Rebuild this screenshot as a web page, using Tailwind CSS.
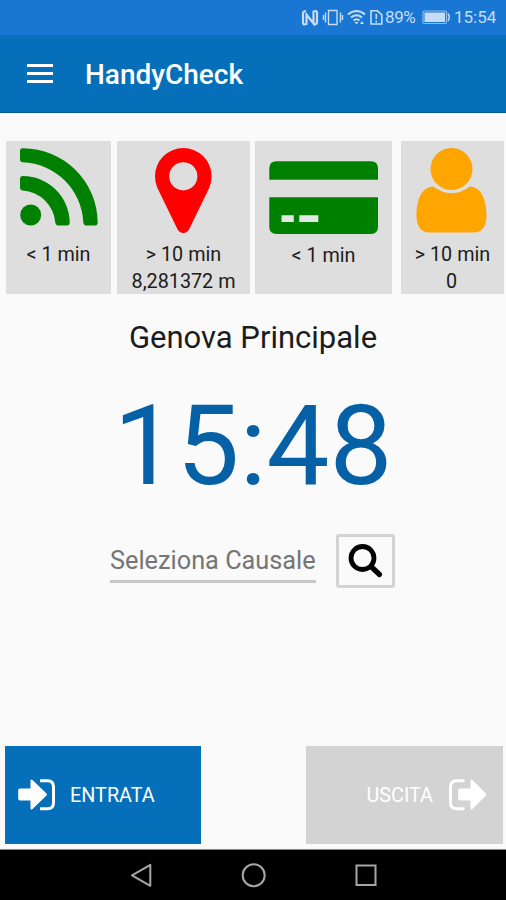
<!DOCTYPE html>
<html lang="it">
<head>
    <meta charset="UTF-8">
    <meta name="viewport" content="width=device-width, initial-scale=1.0">
    <title>HandyCheck</title>
    <script src="https://cdn.jsdelivr.net/npm/@tailwindcss/browser@4"></script>
</head>
<body class="flex flex-col h-[900px] w-[506px] overflow-hidden bg-[#fafafa] font-['Roboto',sans-serif] text-[#1c1c1c]">
    <!-- Status bar -->
    <div class="flex h-[35px] shrink-0 items-center bg-[#1976d2] pl-[301px] text-[#c5dcf4]">
        <svg class="h-[35px] w-[84px] shrink-0" viewBox="301 0 84 35" fill="none" stroke="currentColor">
            <path d="M306 11q-3 0-3 2.500v9q0 2 1.500 2l2-.5V14.500L313.500 23.500V11.500l2-.5q1.500 0 1.500 2v9q0 2.500-3 2.500" stroke-width="2.200" />
            <path d="M328.500 10.500h8.500v14h-8.500zM325.500 12.500v10M340.500 12.500v10M323.500 15v5M342.500 15v5" stroke-width="1.400" />
            <path d="M348 14.500q8.500-7 17 0M351 17.500q5.500-4.500 11 0M353.500 20.500q3-2.500 6 0" stroke-width="1.900" />
            <path d="M354.500 22l2 2.500 2-2.500zM362 21l-2 3h4z" fill="currentColor" stroke="none" />
            <path d="M371 10.800h6.500l4.300 4v9.200h-10.800zM376.300 14v5M376.300 20.500v2" stroke-width="1.600" />
        </svg>
        <span class="mt-[1px] w-[37px] text-[17px] tracking-[-0.4px]">89%</span>
        <svg class="h-[35px] w-[30px] shrink-0" viewBox="420 0 30 35" fill="none" stroke="currentColor">
            <rect x="421" y="11" width="23.500" height="12.500" rx="1.500" stroke-width="1.200" opacity=".7" />
            <rect x="422.500" y="12.500" width="20.500" height="9.500" fill="currentColor" stroke="none" />
            <path d="M446 13.500q2.500 3.700 0 7.500" stroke-width="1.500" />
        </svg>
        <span class="mt-[1px] ml-[2px] text-[17px]">15:54</span>
    </div>

    <!-- Toolbar -->
    <header class="flex h-[78px] shrink-0 items-center border-b border-[#0459a0] bg-[#066fb9] pl-[27px] text-white">
        <div class="flex w-[26px] flex-col gap-[5px]">
            <div class="h-[3px] bg-white"></div>
            <div class="h-[3px] bg-white"></div>
            <div class="h-[3px] bg-white"></div>
        </div>
        <h1 class="mt-[2px] ml-[32px] text-[28px] font-medium">HandyCheck</h1>
    </header>

    <!-- Sensor tiles -->
    <section class="mt-[28px] flex h-[153px] shrink-0 pl-[6px] text-center text-[19.8px] leading-[27px]">
        <div class="w-[105px] bg-[#dedede]">
            <svg class="h-[100px] w-[105px]" viewBox="6 141 105 100" fill="#008000">
                <circle cx="30.700" cy="215" r="10.500" />
                <path d="M23 148.200A75 75 0 0 1 97.700 222.500Q97.700 225.600 94.700 225.600H86.500Q83.700 225.600 83.300 222.500A63 63 0 0 0 22.800 162.300Q20 162 20 159.500V151Q20 148 23 148.200Z" />
                <path d="M23.200 176A47 47 0 0 1 69.700 222.300Q69.900 225.600 66.700 225.600H58.300Q55.800 225.600 55.300 222.500A35 35 0 0 0 22.800 190.500Q20 190 20 187.500V179Q20 175.800 23.200 176Z" />
            </svg>
            <p>&lt; 1 min</p>
        </div>
        <div class="ml-[6px] w-[133px] bg-[#dedede]">
            <svg class="h-[100px] w-[133px]" viewBox="117 141 133 100" fill="#f00">
                <path fill-rule="evenodd" d="M183.300 148A28.300 28.300 0 0 1 211.600 176.300Q211.600 182 209.300 187.700L189 229.500Q187 232.900 183.300 232.900T177.600 229.500L157.300 187.700Q155 182 155 176.300A28.300 28.300 0 0 1 183.300 148ZM183.300 162.200a14.100 14.100 0 1 0 0 28.200a14.100 14.100 0 1 0 0-28.200Z" />
            </svg>
            <p>&gt; 10 min</p>
            <p>8,281372 m</p>
        </div>
        <div class="ml-[5px] w-[137px] bg-[#dedede]">
            <svg class="h-[101px] w-[137px]" viewBox="255 141 137 101" fill="#008000">
                <path d="M269.300 179.800V168.500Q269.300 161.300 276.500 161.300H370.800Q378 161.300 378 168.500V179.800Z" />
                <path d="M269.300 197.300H378V226.800Q378 234 370.800 234H276.500Q269.300 234 269.300 226.800Z" />
                <path d="M281.500 215.300h12.300v6.700h-12.300zM299.300 215.300h19v6.700h-19z" fill="#e4e8e4" />
            </svg>
            <p>&lt; 1 min</p>
        </div>
        <div class="ml-[9px] w-[103px] bg-[#dedede]">
            <svg class="h-[100px] w-[103px]" viewBox="401 141 103 100" fill="#ffa500">
                <circle cx="451.500" cy="169" r="21" />
                <path d="M433 186.500Q451.500 200 470 186.500C481 187 486.500 199 486.500 216C486.500 226 482 232.500 474 232.500H429C421 232.500 416.500 226 416.500 216C416.500 199 422 187 433 186.500Z" />
            </svg>
            <p>&gt; 10 min</p>
            <p class="pr-[2px]">0</p>
        </div>
    </section>

    <!-- Place and clock -->
    <h2 class="mt-[26px] text-center text-[31px] leading-[36px]">Genova Principale</h2>
    <div class="mt-[24px] text-center text-[112px] leading-[132px] text-[#0560a6]">15:48</div>

    <!-- Reason picker -->
    <div class="mt-[22px] flex h-[56px] shrink-0 pl-[110px]">
        <div class="mt-[10px] h-[39px] w-[206px] border-b-[3px] border-[#c8c8c8] text-[25.3px] leading-[34px] whitespace-nowrap text-[#757575]">Seleziona Causale</div>
        <button class="ml-[20px] h-[54px] w-[59px] rounded-[3px] border-[3px] border-[#d3d3d3] bg-[#fafafa]">
            <svg class="h-[48px] w-[53px]" viewBox="339 537 53 48" fill="none" stroke="#000">
                <circle cx="362.500" cy="558" r="11.500" stroke-width="4.800" />
                <path d="M371 566.500L379.500 574.500" stroke-width="5.200" stroke-linecap="round" />
            </svg>
        </button>
    </div>

    <!-- Actions -->
    <div class="mt-auto mb-[5px] flex shrink-0 justify-between pr-[3px] pl-[5px] text-[19.8px] text-white">
        <button class="flex h-[98px] w-[196px] items-center bg-[#066fb9]">
            <svg class="h-[98px] w-[54px] shrink-0" viewBox="5 746 54 98" fill="#fff">
                <path d="M20 788.500h10.500v-7.500q0-2.500 2-1l14 13.500q1 1 0 2l-14 13.500q-2 1.500-2-1v-7.500h-10.500q-1.800 0-1.800-1.800v-8.400q0-1.800 1.800-1.800z" />
                <path d="M40 780.700h7.500q6 0 6 6v16q0 6-6 6h-7.500" fill="none" stroke="#fff" stroke-width="3" />
            </svg>
            <span class="mt-[2px] ml-[11px]">ENTRATA</span>
        </button>
        <button class="flex h-[98px] w-[197px] items-center justify-end bg-[#d3d3d3]">
            <span class="mt-[2px] mr-[12px]">USCITA</span>
            <svg class="h-[98px] w-[58px] shrink-0" viewBox="445 746 58 98" fill="#fff">
                <path d="M460 788.500h10.500v-7.500q0-2.500 2-1l13.500 13.500q1 1 0 2l-13.500 13.500q-2 1.500-2-1v-7.500h-10.500q-1.800 0-1.800-1.800v-8.400q0-1.800 1.800-1.800z" />
                <path d="M464.500 780.700h-7.500q-6.500 0-6.500 6v16q0 6 6.500 6h7.500" fill="none" stroke="#fff" stroke-width="3" />
            </svg>
        </button>
    </div>

    <!-- Navigation bar -->
    <nav class="h-[51px] shrink-0 border-t border-[#888] bg-black">
        <svg class="h-[50px] w-[506px]" viewBox="0 850 506 50" fill="none" stroke="#a6a6a6" stroke-width="2">
            <path d="M150.300 864.800v21L132 875.300z" stroke-linejoin="round" />
            <circle cx="253.700" cy="875.300" r="11" />
            <rect x="356.500" y="865.500" width="19" height="19.500" />
        </svg>
    </nav>
</body>
</html>
